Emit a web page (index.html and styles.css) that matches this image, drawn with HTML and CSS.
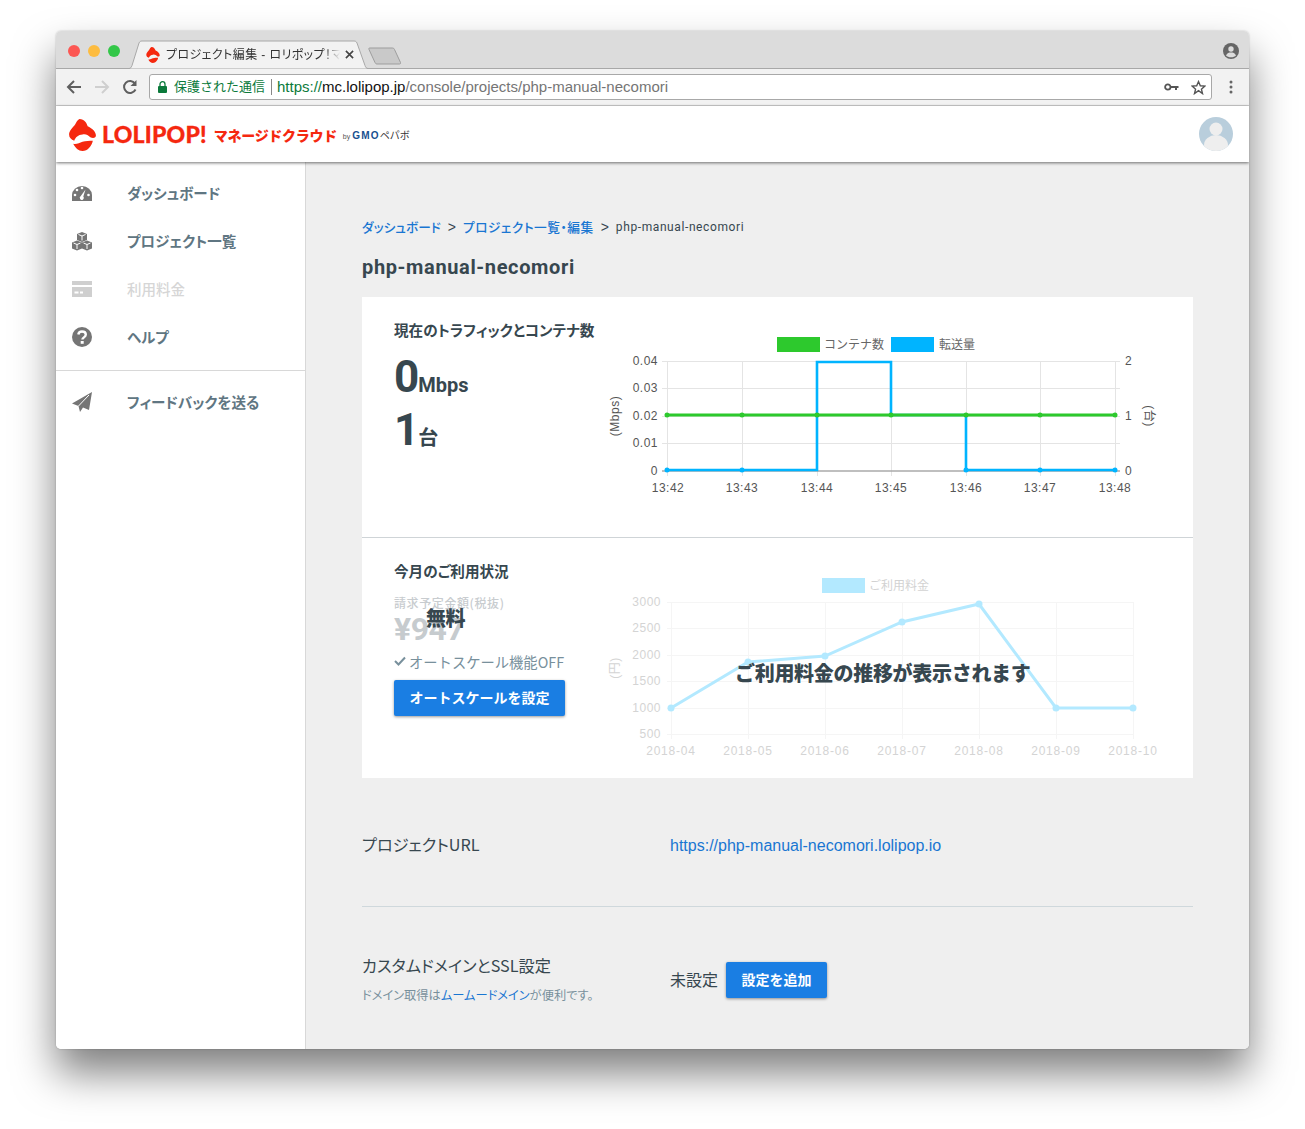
FILE: index.html
```html
<!DOCTYPE html>
<html lang="ja">
<head>
<meta charset="utf-8">
<title>プロジェクト編集 - ロリポップ！マネージドクラウド</title>
<link rel="stylesheet" href="styles.css">
</head>
<body>
<div class="window">
  <div class="tabstrip">
    <div class="lights"><i class="light red"></i><i class="light yellow"></i><i class="light green"></i></div>
    <div class="tab">
      <svg class="tab-shape" width="245" height="29" viewBox="0 0 245 29"><path d="M0 28.500h1c1.500 0 2-.8 3-3L11 3c.7-1.500 1.500-2 3-2h212c1.500 0 2.300.5 3 2l8 22.500c.7 2 1.500 3 3 3h5" fill="#f2f2f2" stroke="#a8a8a8"/></svg>
      <svg class="favicon" width="14" height="16" viewBox="0 0 26 31"><path d="M10 0C15 0 17 4 18 7c4 2 8 5 8 9 0 2-2 3-5 2-2-2-5-4-8-3-4 0-7 3-8 6-3-1-5-3-5-6 0-4 4-7 6-10 1-2 2-4 4-5z" fill="#f5280f"/><path d="M4 24c3 1 6-1 9-2 3-1 7-1 10-1-1 5-5 10-10 10-4 0-7-3-9-7z" fill="#f5280f"/></svg>
      <span class="tab-title">プロジェクト編集 - ロリポップ！マ</span>
      <svg class="tab-close" width="9" height="9" viewBox="0 0 10 10"><path d="M1 1l8 8M9 1l-8 8" stroke="#444" stroke-width="1.800"/></svg>
    </div>
    <svg class="newtab" width="34" height="18" viewBox="0 0 34 18"><path d="M1.500 1h23c1 0 1.500.5 2 1.500l6 13c.3 1-.2 1.500-1 1.500H9c-1 0-1.500-.5-2-1.500L1 2.500C.7 1.500.8 1 1.500 1z" fill="#c9c9c9" stroke="#9d9d9d"/></svg>
    <svg class="profile" width="16" height="16" viewBox="0 0 16 16"><circle cx="8" cy="8" r="8" fill="#666"/><circle cx="8" cy="6" r="2.700" fill="#dcdcdc"/><path d="M3 12.500c1-2.500 3-3 5-3s4 .5 5 3c-1 1-3 1.800-5 1.800s-4-.8-5-1.800z" fill="#dcdcdc"/></svg>
  </div>
  <div class="toolbar">
    <svg class="nav-icon" width="16" height="16" viewBox="0 0 16 16"><path d="M15 8H2M8 2L2 8l6 6" fill="none" stroke="#5f5f5f" stroke-width="2"/></svg>
    <svg class="nav-icon" width="16" height="16" viewBox="0 0 16 16"><path d="M1 8h13M8 2l6 6-6 6" fill="none" stroke="#cfcfcf" stroke-width="2"/></svg>
    <svg class="nav-icon" width="16" height="16" viewBox="0 0 16 16"><path d="M13.500 10.500A6 6 0 1 1 13 4.500" fill="none" stroke="#5f5f5f" stroke-width="2"/><path d="M14.500 1v6h-6z" fill="#5f5f5f"/></svg>
    <div class="omnibox">
      <svg class="lock" width="9" height="12" viewBox="0 0 9 12"><rect x="0" y="5" width="9" height="7" rx="1" fill="#0b7a3b"/><path d="M2 5.500V3.200a2.500 2.500 0 0 1 5 0v2.300" fill="none" stroke="#0b7a3b" stroke-width="1.300"/></svg>
      <span class="secure">保護された通信</span>
      <span class="omni-sep"></span>
      <span class="url"><span class="url-scheme">https://</span><span class="url-host">mc.lolipop.jp</span>/console/projects/php-manual-necomori</span>
      <svg class="key" width="15" height="8" viewBox="0 0 15 8"><circle cx="3.800" cy="4" r="2.700" fill="none" stroke="#555" stroke-width="1.800"/><path d="M6.500 3h8v2H13v2h-2V5H6.500z" fill="#555"/></svg>
      <svg class="star" width="15" height="15" viewBox="0 0 24 24"><path d="M12 2.500l2.900 6.700 7.300.6-5.500 4.800 1.700 7.100L12 17l-6.400 4.700 1.700-7.100L1.800 9.800l7.300-.6z" fill="none" stroke="#555" stroke-width="2.200"/></svg>
    </div>
    <svg class="kebab" width="4" height="14" viewBox="0 0 4 14"><circle cx="2" cy="2" r="1.500" fill="#666"/><circle cx="2" cy="7" r="1.500" fill="#666"/><circle cx="2" cy="12" r="1.500" fill="#666"/></svg>
  </div>
  <header class="apphead">
    <div class="brand">
      <svg class="brand-mark" width="27" height="32" viewBox="0 0 26 31"><path d="M10 0C15 0 17 4 18 7c4 2 8 5 8 9 0 2-2 3-5 2-2-2-5-4-8-3-4 0-7 3-8 6-3-1-5-3-5-6 0-4 4-7 6-10 1-2 2-4 4-5z" fill="#f5280f"/><path d="M4 24c3 1 6-1 9-2 3-1 7-1 10-1-1 5-5 10-10 10-4 0-7-3-9-7z" fill="#f5280f"/></svg>
      <span class="brand-name">LOLIPOP!</span>
      <span class="brand-sub">マネージドクラウド</span>
      <span class="brand-by">by</span><span class="brand-gmo">GMO</span><span class="brand-pepabo">ペパボ</span>
    </div>
    <svg class="avatar" width="34" height="34" viewBox="0 0 34 34"><defs><clipPath id="avclip"><circle cx="17" cy="17" r="17"/></clipPath></defs><circle cx="17" cy="17" r="17" fill="#b9cedc"/><g clip-path="url(#avclip)"><circle cx="17" cy="12" r="6.500" fill="#eeeeee"/><ellipse cx="17" cy="28" rx="12" ry="10" fill="#eeeeee"/></g></svg>
  </header>
  <div class="layout">
    <aside class="sidebar">
      <nav class="nav-group">
        <a class="nav-item">
          <svg class="side-icon" width="20" height="20" viewBox="0 0 20 20"><path d="M0 18v-6a10 9 0 0 1 20 0v6z" fill="#757575"/><g fill="#fff"><circle cx="3" cy="12" r="1.300"/><circle cx="5" cy="7" r="1.300"/><circle cx="10" cy="5" r="1.300"/><circle cx="16.500" cy="12" r="1.300"/></g><path d="M13.500 6.500L11.300 13.500a2 2 0 1 1-2.500-.4z" fill="#fff"/></svg>
          <span>ダッシュボード</span>
        </a>
        <a class="nav-item">
          <svg class="side-icon" width="20" height="20" viewBox="0 0 20 20"><g fill="#757575"><path d="M10 1l5 2v6l-5 2-5-2V3z"/><path d="M5 9.500l5 2v6l-5 2-5-2v-6z"/><path d="M15 9.500l5 2v6l-5 2-5-2v-6z"/></g><path d="M6.500 3.500L10 5l3.500-1.500M10 5v4.500M1.500 12l3.500 1.500L8.500 12M5 13.500V18M11.500 12l3.500 1.500 3.500-1.500M15 13.500V18" fill="none" stroke="#fff" stroke-width="1"/></svg>
          <span>プロジェクト一覧</span>
        </a>
        <a class="nav-item nav-off">
          <svg class="side-icon" width="20" height="20" viewBox="0 0 20 20"><rect x="0" y="2" width="20" height="4" fill="#cfcfcf"/><rect x="0" y="8" width="20" height="10" fill="#cfcfcf"/><path d="M2.500 13.500h4M8 13.500h3" stroke="#fff" stroke-width="2"/></svg>
          <span>利用料金</span>
        </a>
        <a class="nav-item">
          <svg class="side-icon" width="20" height="20" viewBox="0 0 20 20"><circle cx="10" cy="10" r="10" fill="#757575"/><path d="M6.300 7.500c.3-2 1.800-3 3.700-3 2.200 0 3.800 1.300 3.800 3.100 0 2.800-3.400 2.700-3.400 5" fill="none" stroke="#fff" stroke-width="2.400"/><rect x="8.700" y="14" width="3" height="2.800" fill="#fff"/></svg>
          <span>ヘルプ</span>
        </a>
      </nav>
      <nav class="nav-group nav-extra">
        <a class="nav-item">
          <svg class="side-icon" width="20" height="20" viewBox="0 0 20 20"><path d="M20 0L17 18l-6-2.500L8 20l-1.500-6L0 11.500z" fill="#757575"/><path d="M17 3L6.500 14" stroke="#fff" stroke-width="1"/></svg>
          <span>フィードバックを送る</span>
        </a>
      </nav>
    </aside>
    <main class="main">
      <div class="crumbs"><a>ダッシュボード</a><span class="crumb-sep">&gt;</span><a class="crumb-list">プロジェクト一覧・編集</a><span class="crumb-sep">&gt;</span><span class="crumb-now">php-manual-necomori</span></div>
      <h1 class="title">php-manual-necomori</h1>
      <section class="card">
        <div class="panel">
          <div class="panel-left">
            <h2 class="panel-title">現在のトラフィックとコンテナ数</h2>
            <div class="stat stat-first"><span class="stat-num">0</span><span class="stat-unit">Mbps</span></div>
            <div class="stat stat-second"><span class="stat-num">1</span><span class="stat-unit stat-unit-jp">台</span></div>
          </div>
          <svg class="chart" width="570" height="175" viewBox="600 330 570 175">
            <rect x="777" y="337" width="43" height="15" fill="#2dc92d"/>
            <text class="legend" x="824" y="349">コンテナ数</text>
            <rect x="891" y="337" width="43" height="15" fill="#00b4ff"/>
            <text class="legend" x="939" y="349">転送量</text>
            <path class="grid" d="M662 361.500H1120M662 388.500H1120M662 416.500H1120M662 443.500H1120M667.500 361V476M742.500 361V476M817.500 361V476M891.500 361V476M966.500 361V476M1040.500 361V476M1115.500 361V476"/>
            <path d="M662 471H1120" stroke="#aaa" stroke-width="1.500"/>
            <g class="tick tick-end"><text x="658" y="365">0.04</text><text x="658" y="392">0.03</text><text x="658" y="420">0.02</text><text x="658" y="447">0.01</text><text x="658" y="475">0</text></g>
            <g class="tick"><text x="1125" y="365">2</text><text x="1125" y="420">1</text><text x="1125" y="475">0</text></g>
            <g class="tick tick-mid"><text x="668" y="492">13:42</text><text x="742" y="492">13:43</text><text x="817" y="492">13:44</text><text x="891" y="492">13:45</text><text x="966" y="492">13:46</text><text x="1040" y="492">13:47</text><text x="1115" y="492">13:48</text></g>
            <text class="tick tick-mid" transform="translate(619 416) rotate(-90)">(Mbps)</text>
            <text class="tick tick-mid" transform="translate(1145 416) rotate(90)">(台)</text>
            <path d="M667 470H817V362H891V415H966V470H1115" fill="none" stroke="#00b4ff" stroke-width="2.600"/>
            <g fill="#00b4ff"><circle cx="667" cy="470" r="2.500"/><circle cx="742" cy="470" r="2.500"/><circle cx="966" cy="470" r="2.500"/><circle cx="1040" cy="470" r="2.500"/><circle cx="1115" cy="470" r="2.500"/></g>
            <path d="M667 415H1115" stroke="#2dc92d" stroke-width="3"/>
            <g fill="#2dc92d"><circle cx="667" cy="415" r="2.500"/><circle cx="742" cy="415" r="2.500"/><circle cx="817" cy="415" r="2.500"/><circle cx="891" cy="415" r="2.500"/><circle cx="966" cy="415" r="2.500"/><circle cx="1040" cy="415" r="2.500"/><circle cx="1115" cy="415" r="2.500"/></g>
          </svg>
        </div>
        <div class="panel panel-usage">
          <div class="panel-left">
            <h2 class="panel-title">今月のご利用状況</h2>
            <div class="bill">
              <div class="bill-label">請求予定金額(税抜)</div>
              <div class="bill-amount">¥947</div>
              <div class="bill-free">無料</div>
            </div>
            <div class="autoscale">
              <svg width="12" height="10" viewBox="0 0 12 10"><path d="M1 5l3.500 3.500L11 1.500" fill="none" stroke="#78909c" stroke-width="2"/></svg>
              <span>オートスケール機能OFF</span>
            </div>
            <a class="btn btn-wide">オートスケールを設定</a>
          </div>
          <svg class="chart" width="570" height="195" viewBox="600 570 570 195">
            <rect x="822" y="578" width="43" height="15" fill="#b3e9ff"/>
            <text class="legend legend-off" x="869" y="590">ご利用料金</text>
            <path class="grid grid-off" d="M667 602.500H1134M667 628.500H1134M667 655.500H1134M667 681.500H1134M667 708.500H1134M667 734.500H1134M671.500 602V739M748.500 602V739M825.500 602V739M902.500 602V739M979.500 602V739M1056.500 602V739M1133.500 602V739"/>
            <g class="tick tick-off tick-end"><text x="661" y="606">3000</text><text x="661" y="632">2500</text><text x="661" y="659">2000</text><text x="661" y="685">1500</text><text x="661" y="712">1000</text><text x="661" y="738">500</text></g>
            <g class="tick tick-off tick-wide tick-mid"><text x="671" y="755">2018-04</text><text x="748" y="755">2018-05</text><text x="825" y="755">2018-06</text><text x="902" y="755">2018-07</text><text x="979" y="755">2018-08</text><text x="1056" y="755">2018-09</text><text x="1133" y="755">2018-10</text></g>
            <text class="tick tick-off tick-mid" transform="translate(619 668) rotate(-90)">(円)</text>
            <path d="M671 708L748 662 825 656 902 622 979 604 1056 708H1133" fill="none" stroke="#b3e9ff" stroke-width="3"/>
            <g fill="#b3e9ff"><circle cx="671" cy="708" r="3.500"/><circle cx="748" cy="662" r="3.500"/><circle cx="825" cy="656" r="3.500"/><circle cx="902" cy="622" r="3.500"/><circle cx="979" cy="604" r="3.500"/><circle cx="1056" cy="708" r="3.500"/><circle cx="1133" cy="708" r="3.500"/></g>
          </svg>
          <div class="chart-note">ご利用料金の推移が表示されます</div>
        </div>
      </section>
      <div class="info-row info-url">
        <div class="info-label">プロジェクトURL</div>
        <a class="info-link">https://php-manual-necomori.lolipop.io</a>
      </div>
      <div class="info-row info-domain">
        <div class="info-head">
          <div class="info-label">カスタムドメインとSSL設定</div>
          <div class="info-note">ドメイン取得は<a>ムームードメイン</a>が便利です。</div>
        </div>
        <div class="info-value"><span>未設定</span><a class="btn btn-small">設定を追加</a></div>
      </div>
    </main>
  </div>
</div>
</body>
</html>
```
FILE: styles.css
```css
* { box-sizing: border-box; }
html, body { margin: 0; padding: 0; background: #fff; overflow: hidden; height: 100%; }
body { padding: 31px 56px 0; font-family: "Liberation Sans", "Noto Sans CJK JP", sans-serif; color: #37474f; }
a { color: inherit; text-decoration: none; }
h1, h2 { margin: 0; }

.window {
  width: 1193px; height: 1018px; border-radius: 5px; display: flex; flex-direction: column; overflow: hidden;
  box-shadow: 0 24px 42px rgba(0,0,0,.5), 0 0 2px rgba(0,0,0,.25);
}

/* browser chrome */
.tabstrip { height: 38px; flex: none; background: #dcdcdc; border-bottom: 1px solid #a8a8a8; display: flex; align-items: flex-start; position: relative; }
.lights { display: flex; gap: 8px; padding: 14px 0 0 12px; width: 72px; flex: none; }
.light { width: 12px; height: 12px; border-radius: 50%; display: block; }
.red { background: #fc5753; }
.yellow { background: #fdbc40; }
.green { background: #33c748; }
.tab { position: relative; width: 236px; height: 29px; margin-top: 9px; flex: none; display: flex; align-items: center; padding: 0 0 0 18px; }
.tab-shape { position: absolute; left: 0; top: 0; }
.favicon { position: relative; flex: none; margin-right: 6px; }
.tab-title {
  position: relative; width: 174px; white-space: nowrap; font-size: 12px; line-height: 16px; letter-spacing: .4px; margin-top: 1px; color: #333; font-feature-settings: "palt";
  -webkit-mask-image: linear-gradient(90deg, #000 158px, transparent 174px); mask-image: linear-gradient(90deg, #000 158px, transparent 174px);
}
.tab-close { position: relative; margin-left: 5px; flex: none; }
.newtab { margin-top: 16px; margin-left: 4px; flex: none; position: relative; }
.profile { margin-left: auto; margin-top: 12px; margin-right: 10px; flex: none; }

.toolbar { height: 37px; flex: none; background: #f2f2f2; border-bottom: 1px solid #cfcfcf; display: flex; align-items: center; padding-left: 10px; }
.nav-icon { margin-right: 12px; flex: none; }
.nav-icon:nth-child(3) { margin-right: 11px; }
.omnibox { width: 1063px; height: 26px; flex: none; background: #fff; border: 1px solid #a8a8a8; border-radius: 3px; display: flex; align-items: center; padding-left: 8px; font-size: 15px; }
.lock { flex: none; margin-right: 7px; }
.secure { font-size: 13px; line-height: 18px; margin-top: -1px; color: #0b7a3b; }
.omni-sep { width: 1px; height: 16px; background: #888; margin: 0 5px 0 6px; flex: none; }
.url { color: #757575; white-space: nowrap; padding-bottom: 1px; }
.url-scheme { color: #0b7a3b; }
.url-host { color: #111; }
.key { margin-left: auto; margin-right: 12px; flex: none; }
.star { margin-right: 5px; flex: none; }
.kebab { margin-left: 17px; flex: none; }

/* app header */
.apphead { height: 56px; flex: none; background: #fff; display: flex; align-items: center; justify-content: space-between; padding: 0 16px 0 13px; box-shadow: 0 1px 3px rgba(0,0,0,.55); position: relative; z-index: 2; }
.brand { display: flex; align-items: center; color: #f5280f; margin-top: -1px; }
.brand-mark { margin-right: 6px; flex: none; margin-top: 3px; }
.brand-name { font-family: "Lato", sans-serif; font-weight: 900; font-size: 23px; letter-spacing: .2px; margin-right: 7px; -webkit-text-stroke: .3px #f5280f; }
.brand-sub { font-family: "Noto Sans CJK JP", sans-serif; font-weight: 900; font-size: 14px; letter-spacing: -.3px; margin-right: 6px; padding-top: 3px; }
.brand-by { font-size: 7px; color: #555; margin-right: 2px; padding-top: 5px; }
.brand-gmo { font-size: 10px; font-weight: 700; color: #17508f; letter-spacing: 1.200px; padding-top: 3px; }
.brand-pepabo { font-family: "Noto Sans CJK JP", sans-serif; font-size: 10px; color: #333; padding-top: 2px; }

/* layout */
.layout { flex: 1; display: flex; min-height: 0; }
.sidebar { width: 250px; flex: none; background: #fff; border-right: 1px solid #d8d8d8; padding-top: 7px; }
.nav-group { display: flex; flex-direction: column; }
.nav-extra { border-top: 1px solid #d8d8d8; margin-top: 9px; padding-top: 7px; }
.nav-item { height: 48px; display: flex; align-items: center; gap: 35px; padding-left: 16px; font-family: "Noto Sans CJK JP", sans-serif; font-size: 14.500px; font-weight: 700; color: #5f7682; font-feature-settings: "palt"; }
.nav-item span { padding-bottom: 2px; }
.nav-off { color: #d6d6d6; font-weight: 500; }
.side-icon { flex: none; }

.main { flex: 1; background: #efefef; padding: 55px 56px 0; min-width: 0; }
.crumbs { display: flex; align-items: center; font-family: "Noto Sans CJK JP", sans-serif; font-size: 12.700px; line-height: 20px; color: #1976d2; font-weight: 500; font-feature-settings: "palt"; }
.crumb-list { letter-spacing: .5px; }
.crumb-sep { color: #37474f; font-size: 14px; margin: 0 7px; font-family: "Liberation Sans", sans-serif; font-weight: 400; }
.crumb-now { color: #37474f; font-family: "Roboto", sans-serif; font-size: 12px; font-weight: 400; letter-spacing: .6px; }
.title { font-family: "Roboto", sans-serif; font-size: 20px; font-weight: 700; line-height: 28px; letter-spacing: .63px; margin-top: 16px; color: #37474f; }
.card { background: #fff; margin-top: 16px; }
.panel { height: 241px; border-bottom: 1px solid #cfd4d7; display: flex; padding: 0 23px 0 32px; position: relative; }
.panel-usage { height: 240px; border-bottom: 0; }
.panel-left { width: 206px; flex: none; }
.panel-title { font-family: "Noto Sans CJK JP", sans-serif; font-size: 14.600px; line-height: 20px; font-weight: 700; margin-top: 23px; color: #37474f; font-feature-settings: "palt"; white-space: nowrap; }
.chart { flex: none; margin-top: 33px; overflow: visible; }
.panel-usage .chart { margin-top: 32px; }
.stat { display: flex; align-items: baseline; font-family: "Roboto", "Noto Sans CJK JP", sans-serif; font-weight: 700; height: 54px; line-height: 54px; color: #37474f; }
.stat-first { margin-top: 10px; }
.stat-second { margin-top: -1px; }
.stat-num { font-size: 44px; }
.stat-num + .stat-unit { margin-left: -1px; }
.stat-unit { font-size: 20px; }
.stat-unit-jp { font-family: "Noto Sans CJK JP", sans-serif; }
.bill { position: relative; height: 53px; margin-top: 12px; }
.bill-label { font-family: "Noto Sans CJK JP", sans-serif; font-size: 12px; line-height: 20px; letter-spacing: .6px; color: #c8cccf; font-weight: 500; white-space: nowrap; }
.bill-amount { font-family: "Roboto", sans-serif; font-size: 32px; font-weight: 700; line-height: 32px; color: #c6cbce; letter-spacing: -.5px; }
.bill-free { position: absolute; left: 32px; top: 13px; font-family: "Noto Sans CJK JP", sans-serif; font-size: 20px; line-height: 24px; font-weight: 900; letter-spacing: -.5px; color: #37474f; }
.autoscale { display: flex; align-items: center; gap: 3px; height: 20px; margin-top: 5px; font-family: "Noto Sans CJK JP", sans-serif; font-size: 14.300px; color: #78909c; white-space: nowrap; }
.btn { display: flex; align-items: center; justify-content: center; background: #1a7ee3; color: #fff; border-radius: 2px; box-shadow: 0 1px 3px rgba(0,0,0,.4); font-family: "Noto Sans CJK JP", sans-serif; font-size: 14px; font-weight: 700; white-space: nowrap; padding-bottom: 3px; }
.btn-wide { width: 171px; height: 36px; margin-top: 9px; }
.btn-small { width: 101px; height: 36px; }
.chart-note { position: absolute; left: 373px; top: 121px; font-family: "Noto Sans CJK JP", sans-serif; font-size: 20px; line-height: 28px; font-weight: 900; color: #37474f; white-space: nowrap; letter-spacing: -.3px; }

.info-row { display: flex; }
.info-url { margin-top: 55px; height: 74px; border-bottom: 1px solid #cfd8dc; }
.info-url .info-label { margin-top: -1px; }
.info-domain { padding-top: 46px; }
.info-label { width: 308px; font-family: "Noto Sans CJK JP", "Liberation Sans", sans-serif; font-size: 16.200px; line-height: 24px; color: #37474f; font-feature-settings: "palt"; white-space: nowrap; }
.info-link { font-size: 16px; line-height: 26px; color: #1976d2; }
.info-head { width: 308px; }
.info-note { font-family: "Noto Sans CJK JP", sans-serif; font-size: 12.250px; line-height: 16px; margin-top: 10px; color: #78909c; font-feature-settings: "palt"; }
.info-note a { color: #1976d2; }
.info-value { display: flex; align-items: center; gap: 8px; margin-top: 9px; height: 36px; font-family: "Noto Sans CJK JP", sans-serif; font-size: 16px; color: #37474f; }
.info-value span { padding-bottom: 3px; }

/* chart text */
.grid { fill: none; stroke: #e4e4e4; stroke-width: 1; }
.grid-off { stroke: #f5f5f5; }
.legend { font-family: "Noto Sans CJK JP", sans-serif; font-size: 12px; fill: #666; }
.legend-off { fill: #d2d2d2; }
.tick { font-family: "Liberation Sans", "Noto Sans CJK JP", sans-serif; font-size: 12px; fill: #555; letter-spacing: .5px; }
.tick-wide { letter-spacing: .8px; }
.tick-end { text-anchor: end; }
.tick-mid { text-anchor: middle; }
.tick-off { fill: #d4d4d4; }
```
